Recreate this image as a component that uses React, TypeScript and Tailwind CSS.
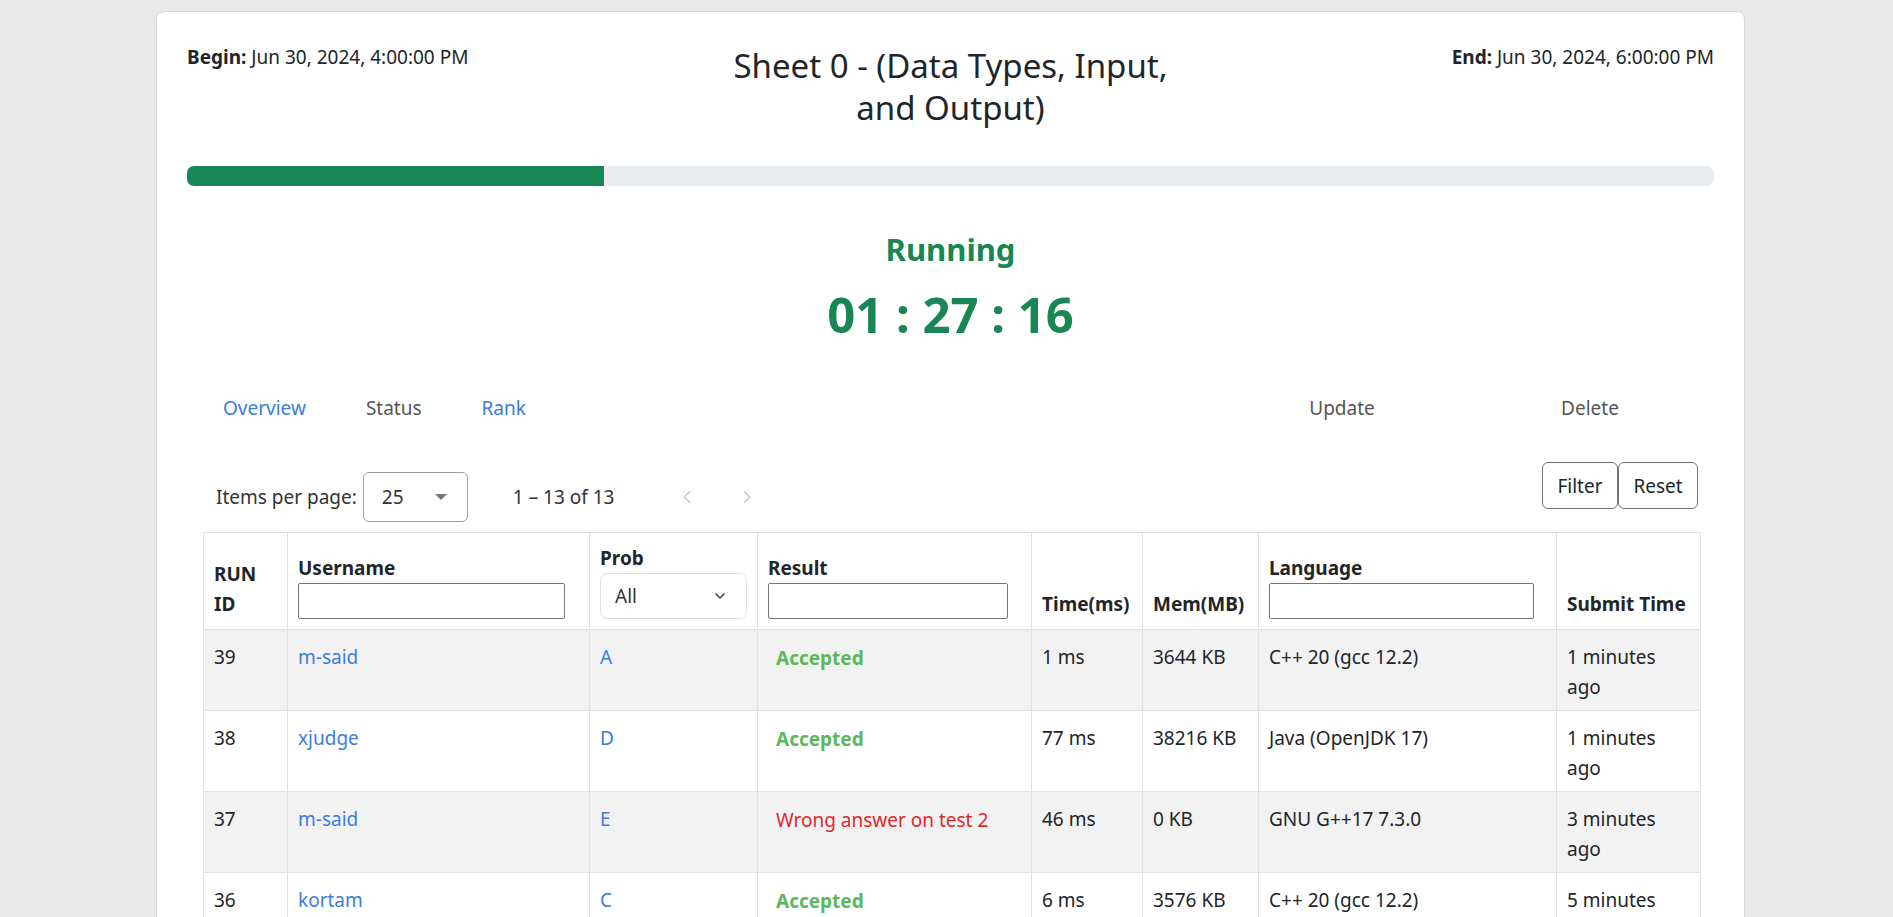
import React from "react";
import { ChevronDown, ChevronLeft, ChevronRight } from "lucide-react";

interface Submission {
  id: number;
  user: string;
  prob: string;
  accepted: boolean;
  result: string;
  time: string;
  mem: string;
  lang: string;
  ago: string;
}

const submissions: Submission[] = [
  { id: 39, user: "m-said", prob: "A", accepted: true, result: "Accepted", time: "1 ms", mem: "3644 KB", lang: "C++ 20 (gcc 12.2)", ago: "1 minutes ago" },
  { id: 38, user: "xjudge", prob: "D", accepted: true, result: "Accepted", time: "77 ms", mem: "38216 KB", lang: "Java (OpenJDK 17)", ago: "1 minutes ago" },
  { id: 37, user: "m-said", prob: "E", accepted: false, result: "Wrong answer on test 2", time: "46 ms", mem: "0 KB", lang: "GNU G++17 7.3.0", ago: "3 minutes ago" },
  { id: 36, user: "kortam", prob: "C", accepted: true, result: "Accepted", time: "6 ms", mem: "3576 KB", lang: "C++ 20 (gcc 12.2)", ago: "5 minutes ago" },
];

const App: React.FC = () => {
  return (
    <div className="min-h-screen bg-[#e9e9e9] pt-[11px] font-['Noto_Sans',sans-serif] text-[19px] leading-[30px] text-[#212529]">
      <div className="ml-[156px] w-[1589px] min-h-[920px] rounded-[8px] border border-[#d9d9d9] bg-white px-[30px] pt-[30px]">
        {/* header */}
        <div className="grid grid-cols-3 items-start">
          <div>
            <span className="font-bold">Begin:</span> Jun 30, 2024, 4:00:00 PM
          </div>
          <h3 className="mx-auto mt-[3px] max-w-[470px] text-center text-[33px] leading-[42px] font-normal">
            Sheet 0 - (Data Types, Input, and Output)
          </h3>
          <div className="text-right">
            <span className="font-bold">End:</span> Jun 30, 2024, 6:00:00 PM
          </div>
        </div>

        {/* progress */}
        <div className="mt-[37px] flex h-[20px] overflow-hidden rounded-[7px] bg-[#e9ecef]">
          <div className="h-full w-[27.3%] bg-[#198754]" />
        </div>

        <div className="mt-[44px] text-center text-[31px] leading-[38px] font-bold text-[#198754]">
          Running
        </div>
        <div className="mt-[16px] text-center text-[49px] leading-[60px] font-bold text-[#198754]">
          01 : 27 : 16
        </div>

        {/* nav */}
        <div className="mt-[49px] flex items-center">
          <div className="flex gap-[60px] pl-[36px]">
            <a className="text-[#3b7ddd]">Overview</a>
            <a className="text-[#555]">Status</a>
            <a className="text-[#3b7ddd]">Rank</a>
          </div>
          <div className="ml-auto flex">
            <a className="w-[248px] text-center text-[#555]">Update</a>
            <a className="w-[248px] text-center text-[#555]">Delete</a>
          </div>
        </div>

        <div className="mx-[16px]">
          {/* paginator + actions */}
          <div className="mt-[39px] flex items-start justify-between">
            <div className="mt-[10px] flex items-center pl-[13px] text-[19px] text-[#333]">
              <span>Items per page:</span>
              <div className="ml-[6px] flex h-[50px] w-[105px] items-center justify-between rounded-[6px] border border-[#9e9e9e] pl-[18px] pr-[20px]">
                <span>25</span>
                <span className="h-0 w-0 border-x-[6px] border-t-[6px] border-x-transparent border-t-[#757575]" />
              </div>
              <span className="ml-[45px]">1 – 13 of 13</span>
              <div className="ml-[52px] flex text-[#c6c6c6]">
                <span className="flex w-[40px] justify-center">
                  <ChevronLeft size={22} strokeWidth={1.5} />
                </span>
                <span className="ml-[20px] flex w-[40px] justify-center">
                  <ChevronRight size={22} strokeWidth={1.5} />
                </span>
              </div>
            </div>
            <div className="flex">
              <button className="h-[47px] w-[76px] rounded-[6px] border border-[#6c757d] bg-white">Filter</button>
              <button className="h-[47px] w-[80px] rounded-[6px] border border-[#6c757d] bg-white">Reset</button>
            </div>
          </div>

          {/* table */}
          <table className="mt-[10px] w-full table-fixed border-collapse">
            <colgroup>
              <col className="w-[84px]" />
              <col className="w-[302px]" />
              <col className="w-[168px]" />
              <col className="w-[274px]" />
              <col className="w-[111px]" />
              <col className="w-[116px]" />
              <col className="w-[298px]" />
              <col className="w-[144px]" />
            </colgroup>
            <thead>
              <tr className="text-left align-bottom">
                <th className="border border-[#dee2e6] p-[10px] font-bold">RUN ID</th>
                <th className="border border-[#dee2e6] p-[10px] font-bold">
                  <div>Username</div>
                  <input className="block h-[36px] w-[267px] rounded-[2px] border border-[#767676]" />
                </th>
                <th className="border border-[#dee2e6] p-[10px] font-bold">
                  <div>Prob</div>
                  <div className="flex h-[46px] w-full items-center justify-between rounded-[7px] border border-[#dee2e6] pl-[14px] pr-[18px] font-normal text-[#333]">
                    <span>All</span>
                    <ChevronDown size={16} strokeWidth={2} />
                  </div>
                </th>
                <th className="border border-[#dee2e6] p-[10px] font-bold">
                  <div>Result</div>
                  <input className="block h-[36px] w-[240px] rounded-[2px] border border-[#767676]" />
                </th>
                <th className="whitespace-nowrap border border-[#dee2e6] p-[10px] font-bold">Time(ms)</th>
                <th className="whitespace-nowrap border border-[#dee2e6] p-[10px] font-bold">Mem(MB)</th>
                <th className="border border-[#dee2e6] p-[10px] font-bold">
                  <div>Language</div>
                  <input className="block h-[36px] w-[265px] rounded-[2px] border border-[#767676]" />
                </th>
                <th className="whitespace-nowrap border border-[#dee2e6] p-[10px] font-bold">Submit Time</th>
              </tr>
            </thead>
            <tbody>
              {submissions.map((s, i) => (
                <tr key={s.id} className={i % 2 === 0 ? "bg-[#f2f2f2] align-top" : "bg-white align-top"}>
                  <td className="border border-[#dee2e6] px-[10px] pt-[12px] pb-[8px]">{s.id}</td>
                  <td className="border border-[#dee2e6] px-[10px] pt-[12px] pb-[8px] text-[#3b7ddd]">{s.user}</td>
                  <td className="border border-[#dee2e6] px-[10px] pt-[12px] pb-[8px] text-[#3b7ddd]">{s.prob}</td>
                  <td className="border border-[#dee2e6] px-[10px] pt-[12px] pb-[8px]">
                    <span
                      className={
                        s.accepted
                          ? "block pl-[8px] pt-[1px] font-bold text-[#5cb85c]"
                          : "block pl-[8px] pt-[1px] text-[#e3262b]"
                      }
                    >
                      {s.result}
                    </span>
                  </td>
                  <td className="border border-[#dee2e6] px-[10px] pt-[12px] pb-[8px]">{s.time}</td>
                  <td className="border border-[#dee2e6] px-[10px] pt-[12px] pb-[8px]">{s.mem}</td>
                  <td className="border border-[#dee2e6] px-[10px] pt-[12px] pb-[8px]">{s.lang}</td>
                  <td className="border border-[#dee2e6] px-[10px] pt-[12px] pb-[8px]">{s.ago}</td>
                </tr>
              ))}
            </tbody>
          </table>
        </div>
      </div>
    </div>
  );
};

export default App;
